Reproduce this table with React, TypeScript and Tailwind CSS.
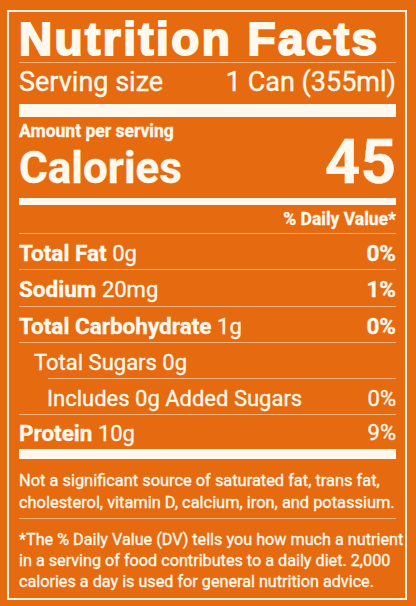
const nutrients = [
  { label: "Total Fat", amount: "0g", dv: "0%", h: "h-[35px] pt-[4px] leading-[31px]" },
  { label: "Sodium", amount: "20mg", dv: "1%", h: "h-[36px] pt-[4px] leading-[31px]" },
  { label: "Total Carbohydrate", amount: "1g", dv: "0%", h: "h-[35px] pt-[4px] leading-[31px]" },
]

function Rule({ className = "" }: { className?: string }) {
  return <div className={`h-px bg-[#f4b383] ${className}`} />
}

export default function App() {
  return (
    <div className="h-[606px] w-[416px] bg-[#e66a10] pl-[7px] pt-[10px] font-['Roboto',sans-serif] text-[#fff8ec] [-webkit-text-stroke:0.35px_#fff8ec]">
      <div className="flex h-[590px] w-[400px] flex-col border-2 border-[#fdf1e2] pl-[10px] pr-[9px]">
        <h1 className="h-[50px] pt-[4px] font-['Liberation_Sans',Arial,sans-serif] text-[46px] font-bold leading-[46px] tracking-[2.4px] [-webkit-text-stroke:2px_#fff8ec]">
          Nutrition Facts
        </h1>
        <Rule className="bg-[#f0a168]" />
        <div className="flex h-[38px] justify-between text-[27px] leading-[38px]">
          <span>Serving size</span>
          <span>1 Can (355ml)</span>
        </div>
        <div className="mt-[3px] h-[13px] bg-[#fff8ec]" />

        <div className="h-[25px] pt-[3px] text-[17.5px] font-bold leading-[22px]">Amount per serving</div>
        <div className="flex h-[56px] items-baseline justify-between font-bold">
          <span className="text-[44px] leading-[40px]">Calories</span>
          <span className="text-[62px] leading-[40px]">45</span>
        </div>
        <div className="h-[7px] bg-[#fff8ec]" />

        <div className="h-[28px] text-right text-[17.5px] font-bold leading-[28px]">% Daily Value*</div>
        <Rule />

        {nutrients.map((n) => (
          <div key={n.label}>
            <div className={`flex justify-between text-[22.5px] ${n.h}`}>
              <span>
                <span className="font-bold">{n.label}</span> <span className="text-[22px]">{n.amount}</span>
              </span>
              <span className="font-bold">{n.dv}</span>
            </div>
            <Rule />
          </div>
        ))}

        <div className="h-[35px] pl-[15px] pt-[4px] text-[22px] leading-[31px]">Total Sugars 0g</div>
        <Rule className="ml-[29px]" />
        <div className="flex h-[35px] justify-between pl-[28px] pt-[4px] text-[22px] leading-[31px]">
          <span>Includes 0g Added Sugars</span>
          <span>0%</span>
        </div>
        <Rule />
        <div className="flex h-[34px] justify-between pt-[2px] text-[22px] leading-[32px]">
          <span>
            <span className="text-[22.5px] font-bold">Protein</span> 10g
          </span>
          <span>9%</span>
        </div>
        <div className="h-[10px] bg-[#fff8ec]" />

        <p className="pb-[5px] pt-[11px] text-[16.4px] leading-[21.6px]">
          <span className="block whitespace-nowrap">Not a significant source of saturated fat, trans fat,</span>
          <span className="block whitespace-nowrap">cholesterol, vitamin D, calcium, iron, and potassium.</span>
        </p>
        <Rule />
        <p className="pt-[10px] text-[16.2px] leading-[21px]">
          <span className="block whitespace-nowrap">*The % Daily Value (DV) tells you how much a nutrient</span>
          <span className="block whitespace-nowrap">in a serving of food contributes to a daily diet. 2,000</span>
          <span className="block whitespace-nowrap">calories a day is used for general nutrition advice.</span>
        </p>
      </div>
    </div>
  )
}
